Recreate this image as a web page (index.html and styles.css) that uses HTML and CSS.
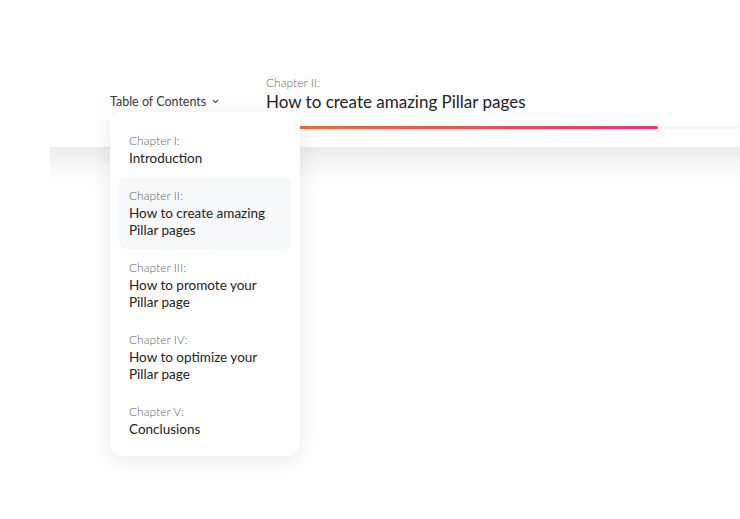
FILE: index.html
```html
<!DOCTYPE html>
<html lang="en">
<head>
<meta charset="utf-8">
<title>Table of Contents</title>
<link rel="stylesheet" href="styles.css">
</head>
<body>
<div class="page">
  <header class="topbar">
    <div class="head-row">
      <div class="toc-toggle">Table of Contents <span class="chev"><svg width="7" height="5" viewBox="0 0 7 5"><path d="M1 1l2.5 2.5L6 1" fill="none" stroke="#555" stroke-width="1.1"/></svg></span></div>
      <div class="current">
        <div class="cur-label">Chapter II:</div>
        <div class="cur-title">How to create amazing Pillar pages</div>
      </div>
    </div>
    <div class="progress"><div class="progress-fill" style="width:358px"></div></div>
  </header>
  <div class="shade"></div>
  <nav class="dropdown">
    <a class="item"><span class="label">Chapter I:</span><span class="title">Introduction</span></a>
    <a class="item active"><span class="label">Chapter II:</span><span class="title">How to create amazing Pillar pages</span></a>
    <a class="item"><span class="label">Chapter III:</span><span class="title">How to promote your Pillar page</span></a>
    <a class="item"><span class="label">Chapter IV:</span><span class="title">How to optimize your Pillar page</span></a>
    <a class="item"><span class="label">Chapter V:</span><span class="title">Conclusions</span></a>
  </nav>
</div>
</body>
</html>
```
FILE: styles.css
```css
* { box-sizing: border-box; }
html, body { margin: 0; padding: 0; background: #fff; }
body { font-family: "Lato", "Noto Sans", sans-serif; color: #222; }
.page { position: relative; width: 740px; height: 519px; overflow: hidden; }
.topbar { background: #fff; padding-top: 75px; height: 147px; }
.head-row { display: flex; align-items: flex-end; padding-left: 110px; }
.toc-toggle { width: 156px; font-size: 12.5px; line-height: 22px; color: #3a3a3a; }
.chev { display: inline-block; margin-left: 3px; vertical-align: 2px; }
.chev svg { display: block; }
.cur-label { font-size: 12px; line-height: 16px; color: #666; font-weight: 300; }
.cur-title { font-size: 17px; line-height: 22px; color: #222; }
.progress { margin: 13px 0 0 300px; height: 3px; background: #f5f5f5; }
.progress-fill { height: 3px; background: linear-gradient(90deg, #ee6a3a, #e9386d); border-radius: 0 2px 2px 0; }
.shade { margin-left: 50px; height: 40px; background: linear-gradient(#ececec, #fafafa 60%, #fff); }
.dropdown { position: absolute; left: 110px; top: 112px; width: 190px; padding: 10px 9px 9px; background: #fff; border-radius: 12px; box-shadow: 0 4px 22px rgba(0,0,0,0.09); display: flex; flex-direction: column; }
.item { display: flex; flex-direction: column; padding: 10px 10px 9px; border-radius: 7px; }
.item.active { background: #f7f8fa; }
.label { font-size: 12px; line-height: 17px; margin-bottom: 1px; color: #666; font-weight: 300; }
.title { font-size: 13.5px; line-height: 17.5px; color: #222; }
```
